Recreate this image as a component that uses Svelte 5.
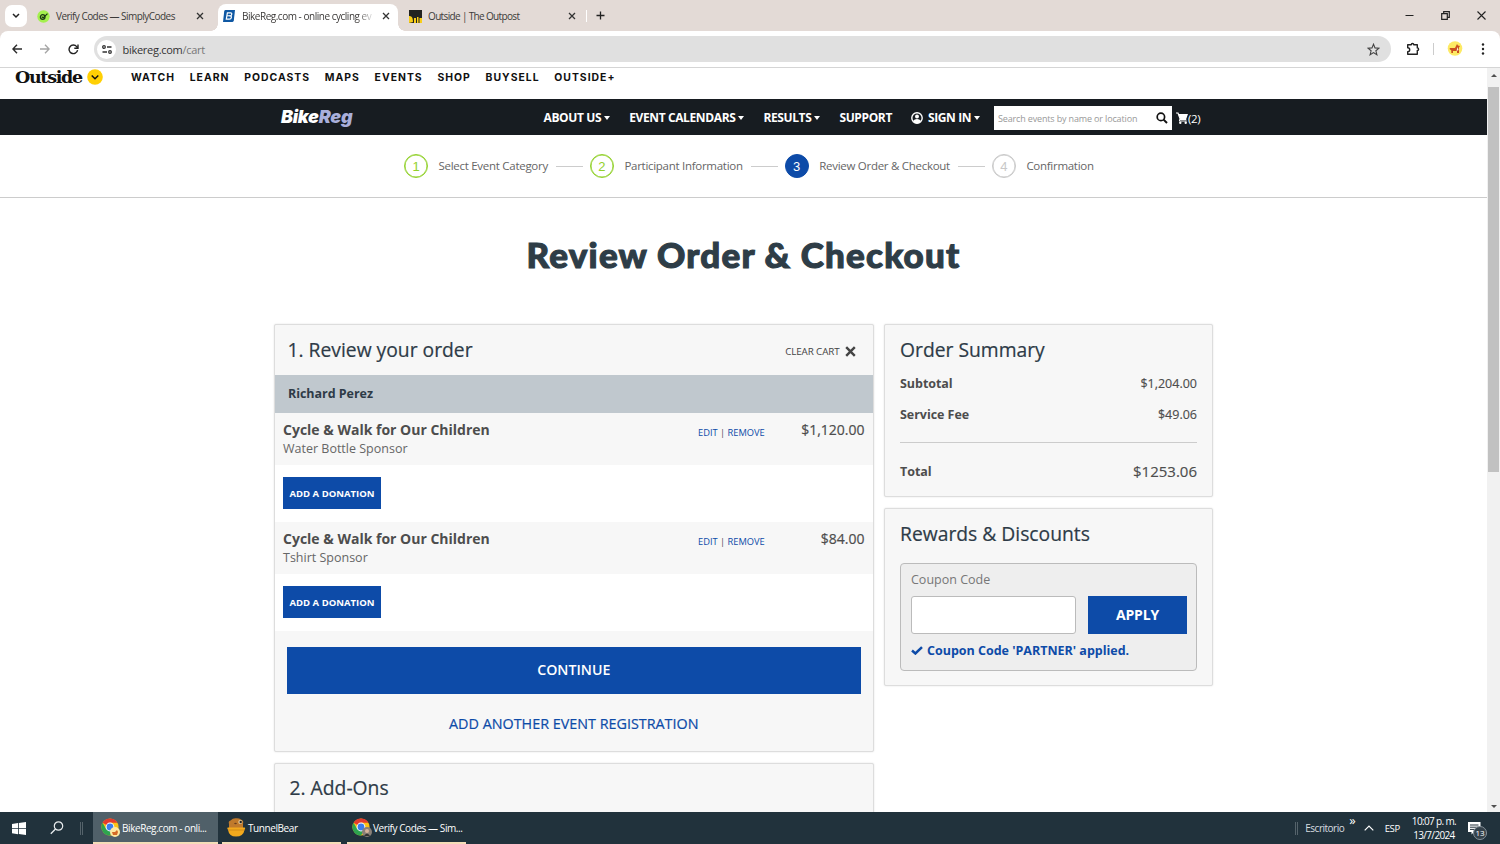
<script lang="ts">
  const outsideLinks = ['WATCH', 'LEARN', 'PODCASTS', 'MAPS', 'EVENTS', 'SHOP', 'BUYSELL', 'OUTSIDE+'];

  const menu = [
    { label: 'ABOUT US', caret: true },
    { label: 'EVENT CALENDARS', caret: true },
    { label: 'RESULTS', caret: true },
    { label: 'SUPPORT', caret: false },
    { label: 'SIGN IN', caret: true, user: true }
  ];

  const steps = [
    { label: 'Select Event Category', state: 'done' },
    { label: 'Participant Information', state: 'done' },
    { label: 'Review Order & Checkout', state: 'current' },
    { label: 'Confirmation', state: 'todo' }
  ];

  const items = [
    { event: 'Cycle & Walk for Our Children', category: 'Water Bottle Sponsor', price: '$1,120.00' },
    { event: 'Cycle & Walk for Our Children', category: 'Tshirt Sponsor', price: '$84.00' }
  ];

  let coupon = $state('');
  let search = $state('');
</script>

{#snippet cross()}
  <svg class="cross" width="8" height="8" viewBox="0 0 8 8"><path d="M1 1l6 6M7 1L1 7" stroke="#333" stroke-width="1.3" /></svg>
{/snippet}

{#snippet chrome()}
  <svg width="19" height="19" viewBox="0 0 19 19">
    <circle cx="9" cy="9" r="8.6" fill="#fbc116" />
    <path d="M9 9L1.55 4.7A8.6 8.6 0 0 1 16.45 4.7H9z" fill="#e33b2e" />
    <path d="M1.55 4.7A8.6 8.6 0 0 0 9 17.6L12.7 11.2 9 9 5.3 11.2z" fill="#2da44f" />
    <circle cx="9" cy="9" r="4.4" fill="#fff" />
    <circle cx="9" cy="9" r="3.4" fill="#3b7ded" />
  </svg>
{/snippet}

<div class="screen">
  <div class="tabstrip">
    <div class="tab-list-button">
      <svg width="8" height="6" viewBox="0 0 8 6"><path d="M1 1l3 3 3-3" fill="none" stroke="#222" stroke-width="1.5" /></svg>
    </div>
    <div class="tab first">
      <svg width="13" height="13" viewBox="0 0 13 13">
        <circle cx="6.5" cy="6.5" r="6.2" fill="#a4f04e" />
        <circle cx="5.7" cy="7" r="2.3" fill="none" stroke="#1d3a14" stroke-width="1.3" />
        <path d="M4.8 6.6l1.3 1.3L10.5 3.6" fill="none" stroke="#1d3a14" stroke-width="1.3" />
      </svg>
      <span class="tab-title t1">Verify Codes — SimplyCodes</span>
      {@render cross()}
    </div>
    <div class="tab active">
      <svg width="12" height="12" viewBox="0 0 12 12">
        <path d="M2.5 0H12L10.8 10.6Q10.6 12 9.5 12H0L1.2 1.4Q1.4 0 2.5 0z" fill="#0f58a3" />
        <path d="M4.4 2.8h3.1q1.5 0 1.2 1.5-.2 1.2-1.2 1.5 1.1.3.9 1.6-.3 1.8-2 1.8H3.3z" fill="none" stroke="#fff" stroke-width="1.2" />
        <path d="M4 5.8h3.4" stroke="#fff" />
      </svg>
      <span class="tab-title t2">BikeReg.com - online cycling ev</span>
      {@render cross()}
    </div>
    <div class="tab third">
      <svg width="13" height="13" viewBox="0 0 13 13">
        <rect width="13" height="13" fill="#222321" />
        <path d="M0 6c3 0 4 2 4 6l-4 1z M5 8h2v5H5z M8 7h1.5v6H8z M10.5 8H13v5h-2.5z" fill="#f8cd18" />
      </svg>
      <span class="tab-title t3">Outside | The Outpost</span>
      {@render cross()}
    </div>
    <i class="tab-separator"></i>
    <svg class="plus" width="9" height="9" viewBox="0 0 9 9"><path d="M4.5 0.5v8M.5 4.5h8" stroke="#222" stroke-width="1.3" /></svg>
    <div class="window-buttons">
      <svg width="9" height="9" viewBox="0 0 9 9"><path d="M.5 4.5h8" stroke="#222" /></svg>
      <svg width="9" height="9" viewBox="0 0 9 9"><path d="M.7 2.7h5.6v5.6H.7zM2.7 2.5V.7h5.6v5.6H6.5" fill="none" stroke="#222" stroke-width="1.2" /></svg>
      <svg width="9" height="9" viewBox="0 0 9 9"><path d="M.5.5l8 8M8.5.5l-8 8" stroke="#222" stroke-width="1.1" /></svg>
    </div>
  </div>

  <div class="toolbar">
    <svg width="10" height="10" viewBox="0 0 10 10"><path d="M10 5H1M5 .7L.9 5 5 9.3" fill="none" stroke="#2b2b2b" stroke-width="1.4" /></svg>
    <svg width="10" height="10" viewBox="0 0 10 10"><path d="M0 5h9M5 .7L9.1 5 5 9.3" fill="none" stroke="#a5a5a5" stroke-width="1.3" /></svg>
    <svg width="11" height="11" viewBox="0 0 11 11"><path d="M9.6 6.2A4.3 4.3 0 1 1 8.7 2.6L9.8 3.8M10 .5v3.7H6.3" fill="none" stroke="#222" stroke-width="1.4" /></svg>
    <div class="address">
      <span class="site-info">
        <svg width="10" height="9" viewBox="0 0 10 9"><g fill="none" stroke="#333" stroke-width="1.3"><circle cx="2" cy="2" r="1.3" /><path d="M5 2h4.5M.5 7H5" /><circle cx="8" cy="7" r="1.3" /></g></svg>
      </span>
      <span class="url">bikereg.com<em>/cart</em></span>
      <svg class="star" width="13" height="13" viewBox="0 0 13 13"><path d="M6.5 1.2l1.5 3.7 4 .3-3.1 2.6 1 3.9-3.4-2.1-3.4 2.1 1-3.9L1 5.2l4-.3z" fill="none" stroke="#444" stroke-width="1.1" /></svg>
    </div>
    <svg class="puzzle" width="14" height="14" viewBox="0 0 14 14"><path d="M1.7 2.7h3.6a1.2 1.2 0 0 1 2.4 0h3.6v3.2a1.3 1.3 0 0 1 0 2.6v3.8H1.7V9.7a2 2 0 0 0 0-4z" fill="none" stroke="#222" stroke-width="1.4" stroke-linejoin="round" /></svg>
    <i class="toolbar-separator"></i>
    <svg class="profile" width="16" height="16" viewBox="0 0 16 16">
      <circle cx="8" cy="7.5" r="7.3" fill="#fdea64" />
      <path d="M3 7h5l2-4 1 1.5L13 5l-1 1.5V12h-2v-2H6v2H4.3V9.5L2.5 8z" fill="#c9501f" />
      <path d="M10.5 6l1 3-2 1z" fill="#fff0dc" />
    </svg>
    <svg class="dots" width="4" height="14" viewBox="0 0 4 14"><g fill="#222"><circle cx="2" cy="2.5" r="1.2" /><circle cx="2" cy="7" r="1.2" /><circle cx="2" cy="11.5" r="1.2" /></g></svg>
  </div>

  <div class="viewport">
    <div class="page">
      <div class="outside-bar">
        <span class="outside-logo">Outside</span>
        <svg class="outside-toggle" width="16" height="16" viewBox="0 0 16 16"><circle cx="8" cy="8" r="7.8" fill="#ffd004" /><path d="M4.7 6.5L8 9.8l3.3-3.3" fill="none" stroke="#111" stroke-width="1.4" /></svg>
        <nav>
          {#each outsideLinks as link}
            <span>{link}</span>
          {/each}
        </nav>
      </div>

      <header>
        <div class="logo">Bike<span>Reg</span></div>
        <nav class="menu">
          {#each menu as entry}
            <span class="menu-item">
              {#if entry.user}
                <svg class="user" width="12" height="12" viewBox="0 0 12 12"><circle cx="6" cy="6" r="5.2" fill="none" stroke="#fff" stroke-width="1.4" /><circle cx="6" cy="4.5" r="2" fill="#fff" /><path d="M2 9q1.5-2 4-2t4 2q-1.500 2.500-4 2.500T2 9z" fill="#fff" /></svg>
              {/if}
              {entry.label}
              {#if entry.caret}<i class="caret"></i>{/if}
            </span>
          {/each}
        </nav>
        <div class="search">
          <input type="text" bind:value={search} placeholder="Search events by name or location" />
          <svg width="12" height="12" viewBox="0 0 12 12"><circle cx="4.9" cy="4.9" r="3.7" fill="none" stroke="#111" stroke-width="1.7" /><path d="M7.6 7.6l3.4 3.4" stroke="#111" stroke-width="2" /></svg>
        </div>
        <div class="cart">
          <svg width="12" height="12" viewBox="0 0 12 12"><path d="M0 1h2l2.3 6.5h6" fill="none" stroke="#fff" stroke-width="1.2" /><path d="M2.3 2H12l-1.8 5H4.2z" fill="#fff" /><path d="M4 7L3.3 9h7.4" fill="none" stroke="#fff" /><circle cx="4.3" cy="10.8" r="1.2" fill="#fff" /><circle cx="9.7" cy="10.8" r="1.2" fill="#fff" /></svg>
          <span>(2)</span>
        </div>
      </header>

      <div class="steps">
        {#each steps as step, i}
          {#if i > 0}<i class="step-line"></i>{/if}
          <div class="step">
            <span class="step-number {step.state}">{i + 1}</span>
            <span class="step-label">{step.label}</span>
          </div>
        {/each}
      </div>

      <h1>Review Order &amp; Checkout</h1>

      <div class="columns">
        <main>
          <section class="card order">
            <div class="card-header">
              <h2>1. Review your order</h2>
              <button class="clear">CLEAR CART
                <svg width="11" height="11" viewBox="0 0 11 11"><path d="M1.2 1.2l8.6 8.6M9.8 1.2L1.2 9.8" stroke="#444" stroke-width="2.4" /></svg>
              </button>
            </div>
            <div class="participant">Richard Perez</div>
            {#each items as item}
              <div class="item">
                <div class="item-info">
                  <strong>{item.event}</strong>
                  <span>{item.category}</span>
                </div>
                <div class="item-actions"><a href="#edit">EDIT</a> | <a href="#remove">REMOVE</a></div>
                <div class="item-price">{item.price}</div>
              </div>
              <div class="donation">
                <button class="donate">ADD A DONATION</button>
              </div>
            {/each}
            <div class="order-footer">
              <button class="continue">CONTINUE</button>
              <a class="another" href="#add">ADD ANOTHER EVENT REGISTRATION</a>
            </div>
          </section>
          <section class="card addons">
            <h2>2. Add-Ons</h2>
          </section>
        </main>

        <aside>
          <section class="card summary">
            <h2>Order Summary</h2>
            <div class="line"><b>Subtotal</b><span>$1,204.00</span></div>
            <div class="line"><b>Service Fee</b><span>$49.06</span></div>
            <div class="line total"><b>Total</b><span>$1253.06</span></div>
          </section>
          <section class="card rewards">
            <h2>Rewards &amp; Discounts</h2>
            <div class="coupon">
              <label for="coupon">Coupon Code</label>
              <div class="coupon-row">
                <input id="coupon" type="text" bind:value={coupon} />
                <button>APPLY</button>
              </div>
              <p class="applied">
                <svg width="12" height="9" viewBox="0 0 12 9"><path d="M1 4.5l3.4 3L11 1.2" fill="none" stroke="#0d4ba8" stroke-width="2.5" /></svg>
                <span>Coupon Code 'PARTNER' applied.</span>
              </p>
            </div>
          </section>
        </aside>
      </div>
    </div>

    <div class="scrollbar">
      <i class="arrow up"></i>
      <div class="thumb"></div>
      <i class="arrow down"></i>
    </div>
  </div>

  <div class="taskbar">
    <svg class="windows" width="14" height="13" viewBox="0 0 14 13"><path d="M0 1.9L6 1v5.2H0zM6.8.9L14 0v6.2H6.8zM0 7h6v5.2L0 11.3zM6.8 7H14v6l-7.2-.9z" fill="#fff" /></svg>
    <svg class="find" width="14" height="14" viewBox="0 0 14 14"><circle cx="8.5" cy="5" r="4.2" fill="none" stroke="#e8ecee" stroke-width="1.2" /><path d="M5.5 8L.8 12.8" stroke="#e8ecee" stroke-width="1.3" /></svg>
    <i class="grip"></i>
    <div class="task active-task">
      {@render chrome()}
      <svg class="badge" width="10" height="10" viewBox="0 0 10 10"><circle cx="5" cy="5" r="5" fill="#ffe9a0" /><path d="M2 5h3l2-2 1 2-1 3H3z" fill="#d56a25" /></svg>
      <span>BikeReg.com - onli...</span>
    </div>
    <div class="task bear">
      <svg width="19" height="19" viewBox="0 0 19 19">
        <path d="M2 10V6Q1 3 3.5 2.5 6 0 9 .3 12 0 14 1.5q3 1 2 4V10z" fill="#c07a2c" />
        <path d="M.7 9.5h17q1 1-.2 2.2Q16.5 18.5 9 18.5 2 18.5 1 11.7q-1.2-1-.3-2.2z" fill="#f2a91d" />
        <path d="M1 12h16.5" stroke="#d08a18" />
        <circle cx="13.3" cy="4" r="2" fill="#e9d2a5" /><circle cx="13.7" cy="4" r="1.2" fill="#222" />
        <ellipse cx="8.5" cy="5.5" rx="1.3" ry=".8" fill="#6b3f1d" />
      </svg>
      <span>TunnelBear</span>
    </div>
    <div class="task">
      {@render chrome()}
      <svg class="badge" width="10" height="10" viewBox="0 0 10 10"><circle cx="5" cy="5" r="5" fill="#8a8078" /><circle cx="5" cy="4" r="2" fill="#d8b49b" /><path d="M2 9q3-5 6 0z" fill="#333" /></svg>
      <span>Verify Codes — Sim...</span>
    </div>
    <div class="tray">
      <i class="grip"></i>
      <span class="desktop">Escritorio</span>
      <span class="more">»</span>
      <svg class="chevron" width="10" height="6" viewBox="0 0 10 6"><path d="M.7 5.3L5 1l4.300 4.300" fill="none" stroke="#fff" stroke-width="1.2" /></svg>
      <span class="lang">ESP</span>
      <span class="clock"><span>10:07 p. m.</span><span>13/7/2024</span></span>
      <div class="notify">
        <svg width="13" height="13" viewBox="0 0 13 13"><path d="M0 0h12.5v10H6L3.5 12.5V10H0z" fill="#fff" /><path d="M2 3h8.5M2 5.2h8.5M2 7.4h5" stroke="#22303a" /></svg>
        <span>13</span>
      </div>
    </div>
  </div>
</div>

<style>
  :global(body) {
    background: #fff;
    overflow: hidden;
  }
  .screen {
    width: 1500px;
    height: 844px;
    display: flex;
    flex-direction: column;
    overflow: hidden;
    background: #e3dad6;
    font-family: "Open Sans", "Noto Sans", sans-serif;
    color: #4d4d4d;
  }
  .screen * {
    box-sizing: border-box;
  }
  svg {
    display: block;
    flex: none;
  }
  button, input {
    font-family: inherit;
    padding: 0;
    border: 0;
  }
  a {
    color: #0d4ba8;
    text-decoration: none;
  }
  i {
    flex: none;
  }
  h1, h2, p {
    margin: 0;
  }

  /* browser frame */
  .tabstrip {
    height: 31px;
    flex: none;
    display: flex;
    align-items: center;
    font-size: 10px;
  }
  .tab-list-button {
    width: 22px;
    height: 22px;
    margin-left: 5px;
    border-radius: 7px;
    background: #fff;
    display: flex;
    align-items: center;
    justify-content: center;
  }
  .tab {
    position: relative;
    height: 27px;
    display: flex;
    align-items: center;
    margin-top: 4px;
    padding-bottom: 3px;
  }
  .tab-title {
    white-space: nowrap;
    color: #3c3a39;
  }
  .tab .cross {
    margin-left: auto;
  }
  .first {
    width: 191px;
    padding-left: 10px;
    padding-right: 14px;
  }
  .t1 {
    margin-left: 6px;
    letter-spacing: -0.54px;
  }
  .active {
    width: 180px;
    padding-left: 5px;
    padding-right: 8px;
    background: #fff;
    border-radius: 8px 8px 0 0;
  }
  .active::before, .active::after {
    content: "";
    position: absolute;
    bottom: 0;
    width: 7px;
    height: 7px;
  }
  .active::before {
    left: -7px;
    background: radial-gradient(circle at 0 0, transparent 6.5px, #fff 7px);
  }
  .active::after {
    right: -7px;
    background: radial-gradient(circle at 100% 0, transparent 6.5px, #fff 7px);
  }
  .t2 {
    width: 130px;
    margin-left: 7px;
    letter-spacing: -0.48px;
    mask-image: linear-gradient(90deg, #000 115px, transparent 133px);
  }
  .third {
    width: 188px;
    padding-left: 11px;
    padding-right: 10px;
  }
  .t3 {
    margin-left: 6px;
    letter-spacing: -0.65px;
  }
  .tab-separator {
    width: 1px;
    height: 12px;
    background: #fff;
  }
  .plus {
    margin-left: 9px;
  }
  .window-buttons {
    display: flex;
    gap: 27px;
    margin-left: auto;
    margin-right: 14px;
  }
  .toolbar {
    height: 37px;
    flex: none;
    display: flex;
    align-items: center;
    padding-left: 12px;
    gap: 18px;
    background: #fff;
    border-bottom: 1px solid #d5d5d5;
    border-radius: 8px 8px 0 0;
  }
  .address {
    width: 1297px;
    height: 26px;
    margin-left: -3px;
    display: flex;
    align-items: center;
    border-radius: 13px;
    background: #e0e0e0;
  }
  .site-info {
    width: 19px;
    height: 19px;
    margin-left: 3px;
    border-radius: 50%;
    background: #fff;
    display: flex;
    align-items: center;
    justify-content: center;
  }
  .url {
    margin-left: 6.5px;
    font-size: 11px;
    letter-spacing: -0.28px;
    color: #333;
  }
  .url em {
    font-style: normal;
    color: #777;
  }
  .star {
    margin-left: auto;
    margin-right: 11px;
  }
  .puzzle {
    margin-left: -3px;
  }
  .toolbar-separator {
    width: 1px;
    height: 12px;
    margin-left: -5px;
    background: #ccc;
  }
  .profile {
    margin-left: -5px;
  }

  /* page */
  .viewport {
    flex: 1;
    min-height: 0;
    display: flex;
  }
  .page {
    width: 1487px;
    overflow: hidden;
    background: #fff;
  }
  .outside-bar {
    height: 31px;
    display: flex;
    align-items: flex-start;
    padding: 1px 0 0 15px;
  }
  .outside-logo {
    width: 68px;
    margin-top: -1px;
    font: 700 17.5px/19px "DejaVu Serif", serif;
    letter-spacing: -1.3px;
    color: #111;
  }
  .outside-toggle {
    margin-left: 4px;
  }
  .outside-bar nav {
    display: flex;
    gap: 14.8px;
    margin-left: 28px;
    font: 700 10.4px/17px Inter, sans-serif;
    letter-spacing: 1px;
    color: #111;
  }
  header {
    height: 36px;
    display: flex;
    align-items: center;
    padding: 2px 0 0 281px;
    background: #171c21;
    color: #fff;
    white-space: nowrap;
  }
  .logo {
    width: 262.5px;
    margin-top: -2px;
    font: italic 900 18px/20px Inter, sans-serif;
    letter-spacing: -0.25px;
  }
  .logo span {
    color: #a9afdb;
  }
  .menu {
    width: 450.5px;
    display: flex;
    gap: 19px;
    font-size: 12px;
    line-height: 16px;
    font-weight: 700;
    letter-spacing: -0.38px;
  }
  .menu-item {
    display: flex;
    align-items: center;
  }
  .user {
    margin-right: 5px;
  }
  .caret {
    margin-left: 3px;
    border: 3.5px solid transparent;
    border-top: 4px solid #fff;
    border-bottom: 0;
  }
  .search {
    width: 178px;
    height: 24px;
    display: flex;
    align-items: center;
    background: #fff;
  }
  .search input {
    width: 162px;
    padding-left: 4px;
    background: none;
    font-size: 9px;
    letter-spacing: -0.15px;
    outline: 0;
  }
  .search input::placeholder {
    color: #999;
  }
  .cart {
    display: flex;
    align-items: center;
    margin-left: 4px;
    font-size: 11.5px;
    letter-spacing: -0.3px;
  }
  .steps {
    height: 63px;
    display: flex;
    align-items: center;
    padding-left: 404px;
    border-bottom: 1px solid #ccc;
    font-size: 11.5px;
    color: #666;
  }
  .step {
    display: flex;
    align-items: center;
    gap: 10.5px;
  }
  .step-number {
    width: 24px;
    height: 24px;
    border: 1.5px solid #92d12b;
    border-radius: 50%;
    font: 13px/23px "Liberation Sans", sans-serif;
    text-align: center;
    color: #92d12b;
    box-shadow: inset 0 0 0 0.5px #92d12b;
  }
  .step-number.current {
    background: #0d4ba8;
    border-color: #0d4ba8;
    box-shadow: none;
    color: #fff;
  }
  .step-number.todo {
    border-color: #c8c8c8;
    box-shadow: inset 0 0 0 0.5px #c8c8c8;
    color: #c8c8c8;
  }
  .step-label {
    margin-top: -2px;
    white-space: nowrap;
    letter-spacing: -0.28px;
  }
  .step-line {
    width: 27px;
    height: 1px;
    margin: 0 7px 0 8px;
    background: #ccc;
  }
  h1 {
    margin-top: 32px;
    text-align: center;
    font-family: Lato, "Open Sans", sans-serif;
    font-size: 35px;
    line-height: 48px;
    font-weight: 900;
    letter-spacing: 1.2px;
    -webkit-text-stroke: 1.1px #2e3d47;
    color: #2e3d47;
  }
  h2 {
    font-size: 19.3px;
    line-height: 26px;
    font-weight: 500;
    -webkit-text-stroke: 0.2px #2e3b47;
    color: #2e3b47;
  }
  .columns {
    display: flex;
    align-items: flex-start;
    gap: 10.5px;
    margin-top: 46px;
    padding-left: 274px;
  }
  main {
    width: 599.5px;
  }
  aside {
    width: 329px;
  }
  .card {
    background: #f7f7f7;
    border: 1px solid #ddd;
    border-radius: 2px;
    box-shadow: 0 0 2px rgba(0, 0, 0, 0.12);
  }
  .order {
    height: 428px;
  }
  .card-header {
    height: 50px;
    display: flex;
    align-items: center;
    justify-content: space-between;
    padding: 0 17px 0 12.5px;
  }
  .clear {
    display: flex;
    align-items: center;
    gap: 5px;
    margin-top: 3px;
    background: none;
    font-size: 9.8px;
    letter-spacing: -0.1px;
    color: #444;
  }
  .participant {
    height: 37.5px;
    padding-left: 13px;
    background: #c0c8ce;
    font-size: 12.5px;
    line-height: 38px;
    font-weight: 700;
    letter-spacing: -0.04px;
    color: #2e3b47;
  }
  .item {
    height: 52.5px;
    display: flex;
    padding: 7px 8px 0;
  }
  .item-info {
    width: 415px;
    display: flex;
    flex-direction: column;
  }
  .item-info strong {
    font-size: 14px;
    line-height: 19px;
    font-weight: 700;
  }
  .item-info span {
    font-size: 12.5px;
    line-height: 19px;
    color: #666;
  }
  .item-actions {
    margin-top: 5px;
    font-size: 9.3px;
    line-height: 16px;
  }
  .item-price {
    margin-left: auto;
    font-size: 14px;
    line-height: 19px;
    -webkit-text-stroke: 0.2px #4d4d4d;
  }
  .donation {
    height: 56.5px;
    padding: 12px 8px;
    background: #fff;
  }
  .donate {
    width: 98px;
    height: 32px;
    display: block;
    background: #0d4ba8;
    font-size: 9.5px;
    font-weight: 700;
    color: #fff;
  }
  .order-footer {
    display: flex;
    flex-direction: column;
    align-items: center;
    padding: 16px 12px 0;
  }
  .continue {
    width: 100%;
    height: 47px;
    padding-bottom: 2px;
    background: #0d4ba8;
    font-size: 14.2px;
    font-weight: 600;
    color: #fff;
  }
  .another {
    margin-top: 20px;
    font-size: 14.35px;
    line-height: 20px;
    -webkit-text-stroke: 0.2px #0d4ba8;
  }
  .addons {
    height: 100px;
    margin-top: 11px;
    padding: 11px 14.5px;
  }
  .summary {
    height: 173px;
    padding: 12px 15px 0;
  }
  .line {
    display: flex;
    justify-content: space-between;
    font-size: 12.5px;
    line-height: 19px;
    margin-top: 12px;
  }
  h2 + .line {
    margin-top: 11px;
  }
  .line b {
    font-weight: 700;
    letter-spacing: -0.04px;
  }
  .line span {
    -webkit-text-stroke: 0.15px #4d4d4d;
  }
  .line.total {
    margin-top: 18px;
    padding-top: 19px;
    border-top: 1px solid #ccc;
  }
  .total span {
    font-size: 15px;
  }
  .rewards {
    height: 178px;
    margin-top: 11px;
    padding: 12px 15px 0;
  }
  .coupon {
    height: 108px;
    margin-top: 16px;
    padding: 7px 9px 0 10px;
    border: 1px solid #bbb;
    border-radius: 4px;
    background: #eee;
  }
  .coupon label {
    display: block;
    font-size: 12.5px;
    line-height: 18px;
    color: #777;
  }
  .coupon-row {
    display: flex;
    justify-content: space-between;
    margin-top: 7px;
  }
  .coupon-row input {
    width: 165px;
    height: 38px;
    border: 1px solid #bbb;
    border-radius: 3px;
    background: #fff;
  }
  .coupon-row button {
    width: 99px;
    height: 38px;
    padding-bottom: 1px;
    background: #0d4ba8;
    font-size: 14px;
    font-weight: 700;
    letter-spacing: -0.2px;
    color: #fff;
  }
  .applied {
    display: flex;
    align-items: center;
    gap: 4px;
    margin-top: 7px;
    font-size: 12.5px;
    line-height: 19px;
    font-weight: 700;
    letter-spacing: -0.01px;
    white-space: nowrap;
    color: #0d4ba8;
  }
  .scrollbar {
    width: 13px;
    display: flex;
    flex-direction: column;
    align-items: center;
    padding: 6px 0 4px;
    background: #f1f1f1;
  }
  .thumb {
    width: 11px;
    height: 385px;
    margin-top: 10px;
    background: #c1c1c1;
  }
  .arrow {
    border: 3px solid transparent;
  }
  .up {
    border-top: 0;
    border-bottom: 3.5px solid #505050;
  }
  .down {
    margin-top: auto;
    border-bottom: 0;
    border-top: 3.5px solid #505050;
  }

  /* taskbar */
  .taskbar {
    height: 32px;
    flex: none;
    display: flex;
    align-items: center;
    background: #21323c;
    color: #fff;
    font-size: 10px;
    white-space: nowrap;
  }
  .windows {
    margin-left: 12px;
  }
  .find {
    margin-left: 24px;
  }
  .grip {
    width: 3px;
    height: 13px;
    border: solid #55636b;
    border-width: 0 1px;
  }
  .taskbar > .grip {
    margin: 0 10px 0 16px;
  }
  .task {
    position: relative;
    width: 119px;
    height: 32px;
    display: flex;
    align-items: center;
    padding-left: 5px;
    border-bottom: 2px solid #f5ddb8;
  }
  .active-task {
    width: 125px;
    padding-left: 8px;
    background: #506069;
  }
  .bear {
    margin: 0 6px 0 4px;
  }
  .badge {
    position: absolute;
    left: 15px;
    top: 15px;
  }
  .active-task .badge {
    left: 17px;
  }
  .task span {
    margin: 1px 0 0 2px;
    letter-spacing: -0.42px;
  }
  .tray {
    display: flex;
    align-items: center;
    margin-left: auto;
    margin-right: 12px;
  }
  .desktop {
    margin-left: 7px;
    letter-spacing: -0.5px;
    color: #d8dde0;
  }
  .more {
    margin: -16px 0 0 5px;
    font-size: 13px;
  }
  .chevron {
    margin-left: 8px;
  }
  .lang {
    margin-left: 11px;
    font-size: 9.5px;
    letter-spacing: -0.35px;
  }
  .clock {
    display: flex;
    flex-direction: column;
    align-items: center;
    margin-left: 12px;
    line-height: 14px;
    letter-spacing: -0.65px;
  }
  .notify {
    position: relative;
    margin-left: 12px;
    padding-right: 7px;
  }
  .notify span {
    position: absolute;
    left: 5px;
    top: 4px;
    width: 14px;
    height: 14px;
    border: 1px solid #87929a;
    border-radius: 50%;
    background: #35424b;
    font-size: 8px;
    line-height: 12px;
    text-align: center;
  }
</style>
